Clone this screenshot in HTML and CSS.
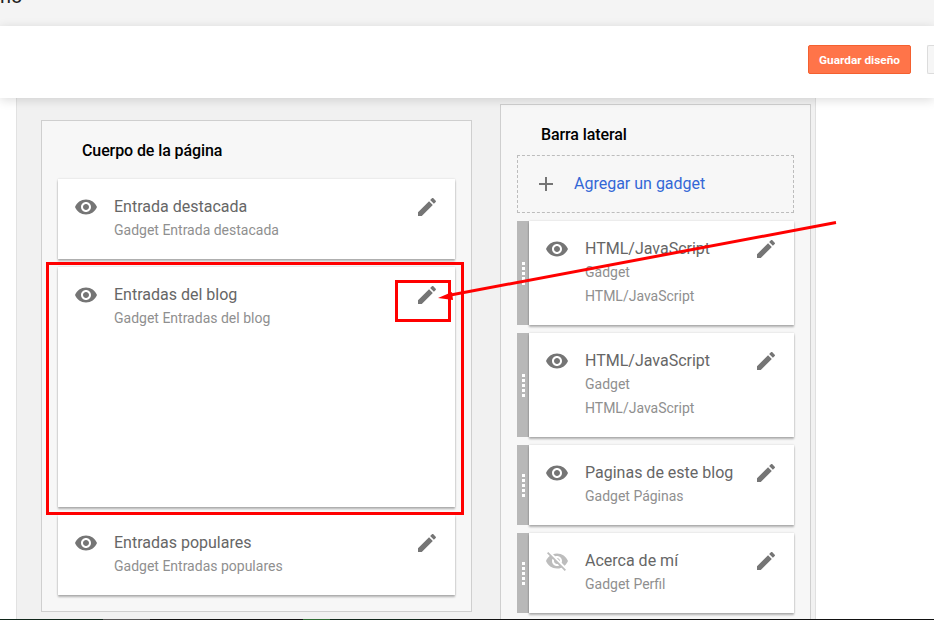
FILE: index.html
```html
<!DOCTYPE html>
<html lang="es">
<head>
  <meta charset="UTF-8" />
  <title>Diseño</title>
  <link rel="stylesheet" href="styles.css">
</head>
<body>
  <svg class="icon-defs" width="0" height="0">
    <symbol id="i-eye" viewBox="0 0 24 24"><path d="M12 4.500C7 4.500 2.730 7.610 1 12c1.730 4.390 6 7.500 11 7.500s9.270-3.110 11-7.500c-1.730-4.390-6-7.500-11-7.500zM12 17c-2.760 0-5-2.240-5-5s2.240-5 5-5 5 2.240 5 5-2.240 5-5 5zm0-8c-1.660 0-3 1.340-3 3s1.340 3 3 3 3-1.340 3-3-1.340-3-3-3z"/></symbol>
    <symbol id="i-eye-off" viewBox="0 0 24 24"><path d="M12 7c2.760 0 5 2.240 5 5 0 .65-.13 1.260-.36 1.830l2.920 2.920c1.510-1.260 2.700-2.890 3.430-4.750-1.730-4.390-6-7.500-11-7.500-1.400 0-2.740.25-3.980.7l2.160 2.160C10.740 7.130 11.350 7 12 7zM2 4.270l2.280 2.280.46.46C3.080 8.300 1.780 10.020 1 12c1.730 4.390 6 7.500 11 7.500 1.550 0 3.030-.3 4.380-.84l.42.42L19.730 22 21 20.730 3.270 3 2 4.270zM7.530 9.800l1.550 1.550c-.05.21-.08.43-.08.65 0 1.660 1.340 3 3 3 .22 0 .44-.03.65-.08l1.550 1.550c-.67.33-1.410.53-2.200.53-2.760 0-5-2.240-5-5 0-.79.2-1.530.53-2.200zm4.310-.78l3.150 3.150.02-.16c0-1.660-1.340-3-3-3l-.17.01z"/></symbol>
    <symbol id="i-edit" viewBox="0 0 24 24"><path d="M3 17.250V21h3.750L17.810 9.940l-3.750-3.750L3 17.250zM20.710 7.040c.39-.39.39-1.020 0-1.410l-2.340-2.340c-.39-.39-1.020-.39-1.410 0l-1.830 1.830 3.750 3.750 1.830-1.830z"/></symbol>
  </svg>

  <div class="topbar"><span class="topbar-title">no</span></div>

  <header class="header">
    <button class="btn btn-save">Guardar diseño</button>
    <button class="btn btn-other"></button>
  </header>

  <main class="canvas">
    <section class="panel panel-body">
      <h2 class="panel-title">Cuerpo de la página</h2>
      <div class="card">
        <svg class="icon eye"><use href="#i-eye"/></svg>
        <div class="card-text">
          <div class="card-name">Entrada destacada</div>
          <div class="card-sub">Gadget Entrada destacada</div>
        </div>
        <svg class="icon edit"><use href="#i-edit"/></svg>
      </div>
      <div class="card card-tall">
        <svg class="icon eye"><use href="#i-eye"/></svg>
        <div class="card-text">
          <div class="card-name">Entradas del blog</div>
          <div class="card-sub">Gadget Entradas del blog</div>
        </div>
        <svg class="icon edit"><use href="#i-edit"/></svg>
      </div>
      <div class="card">
        <svg class="icon eye"><use href="#i-eye"/></svg>
        <div class="card-text">
          <div class="card-name">Entradas populares</div>
          <div class="card-sub">Gadget Entradas populares</div>
        </div>
        <svg class="icon edit"><use href="#i-edit"/></svg>
      </div>
    </section>

    <section class="panel panel-side">
      <h2 class="panel-title">Barra lateral</h2>
      <div class="add-gadget">
        <svg class="plus" width="14" height="14" viewBox="0 0 14 14"><path d="M6 0h2v6h6v2H8v6H6V8H0V6h6z"/></svg>
        <a class="add-link">Agregar un gadget</a>
      </div>
      <div class="row">
        <div class="handle"><span class="dots"></span></div>
        <div class="card">
          <svg class="icon eye"><use href="#i-eye"/></svg>
          <div class="card-text">
            <div class="card-name">HTML/JavaScript</div>
            <div class="card-sub">Gadget<br>HTML/JavaScript</div>
          </div>
          <svg class="icon edit"><use href="#i-edit"/></svg>
        </div>
      </div>
      <div class="row">
        <div class="handle"><span class="dots"></span></div>
        <div class="card">
          <svg class="icon eye"><use href="#i-eye"/></svg>
          <div class="card-text">
            <div class="card-name">HTML/JavaScript</div>
            <div class="card-sub">Gadget<br>HTML/JavaScript</div>
          </div>
          <svg class="icon edit"><use href="#i-edit"/></svg>
        </div>
      </div>
      <div class="row">
        <div class="handle"><span class="dots"></span></div>
        <div class="card">
          <svg class="icon eye"><use href="#i-eye"/></svg>
          <div class="card-text">
            <div class="card-name">Paginas de este blog</div>
            <div class="card-sub">Gadget Páginas</div>
          </div>
          <svg class="icon edit"><use href="#i-edit"/></svg>
        </div>
      </div>
      <div class="row">
        <div class="handle"><span class="dots"></span></div>
        <div class="card">
          <svg class="icon eye eye-hidden"><use href="#i-eye-off"/></svg>
          <div class="card-text">
            <div class="card-name">Acerca de mí</div>
            <div class="card-sub">Gadget Perfil</div>
          </div>
          <svg class="icon edit"><use href="#i-edit"/></svg>
        </div>
      </div>
    </section>
  </main>

  <div class="bottom-line"></div>

  <!-- marcas rojas encima de la captura -->
  <svg class="marks" width="934" height="620" viewBox="0 0 934 620">
    <rect x="47.500" y="263.500" width="415" height="250" fill="none" stroke="#f00" stroke-width="3"/>
    <rect x="396.500" y="281.500" width="53" height="39" fill="none" stroke="#f00" stroke-width="3"/>
    <path d="M836 222.500L448 295.500" fill="none" stroke="#f00" stroke-width="3"/>
    <path d="M438 298L452 292L453 300z" fill="#f00"/>
  </svg>
</body>
</html>
```

FILE: styles.css
```css
html, body {
  margin: 0;
  height: 620px;
  overflow: hidden;
}
body {
  position: relative;
  display: flex;
  flex-direction: column;
  width: 934px;
  background: #fff;
  font-family: Roboto, sans-serif;
}
.icon-defs {
  position: absolute;
}
.topbar {
  flex: none;
  height: 26px;
  background: #f4f4f4;
  overflow: hidden;
  color: #222;
  font-size: 20px;
  line-height: 24px;
}
.topbar-title {
  display: block;
  margin: -16px 0 0 0;
}
.header {
  flex: none;
  position: relative;
  z-index: 2;
  display: flex;
  gap: 16px;
  align-items: center;
  box-sizing: border-box;
  height: 72px;
  padding: 0 0 5px 808px;
  background: #fff;
  box-shadow: 0 2px 10px rgba(0, 0, 0, .14);
}
.btn {
  flex: none;
  height: 29px;
  padding: 0;
  border-radius: 2px;
  font-family: Roboto, sans-serif;
  font-size: 11.800px;
  font-weight: 700;
}
.btn-save {
  width: 103px;
  background: #ff7449;
  border: 1px solid #f4602f;
  color: #fff;
}
.btn-other {
  width: 7px;
  background: #f6f6f6;
  border: 1px solid #dcdcdc;
  border-right: none;
  border-radius: 2px 0 0 2px;
}
.canvas {
  flex: 1;
  min-height: 0;
  display: flex;
  align-items: flex-start;
  width: 800px;
  box-sizing: border-box;
  margin-left: 16px;
  padding: 6px 0 0 24px;
  background: #f1f1f1;
  border-left: 1px solid #e2e2e2;
  border-right: 1px solid #e0e0e0;
}
.panel {
  box-sizing: border-box;
  background: #f7f7f7;
  border: 1px solid #cfcfcf;
}
.panel-body {
  width: 431px;
  height: 492px;
  margin-top: 16px;
  padding: 0 16px;
}
.panel-side {
  width: 311px;
  height: 530px;
  margin-left: 28px;
  padding: 0 16px;
}
.panel-title {
  height: 58px;
  margin: 0;
  padding-left: 24px;
  color: #000;
  font-size: 16px;
  font-weight: 500;
  letter-spacing: -.1px;
  line-height: 60px;
}
.panel-side .panel-title {
  height: 50px;
  line-height: 59px;
}
.card {
  flex: 1;
  display: flex;
  box-sizing: border-box;
  min-width: 0;
  padding: 16px 16px 17px;
  margin-bottom: 8px;
  background: #fff;
  box-shadow: 0 2px 2px rgba(0, 0, 0, .28), 0 0 2px rgba(0, 0, 0, .14);
}
.card-tall {
  height: 240px;
}
.icon {
  flex: none;
  width: 24px;
  height: 24px;
  fill: #757575;
}
.eye-hidden {
  fill: #bdbdbd;
}
.card-text {
  flex: 1;
  min-width: 0;
  padding-left: 16px;
}
.card-name {
  color: #666;
  font-size: 16px;
  line-height: 24px;
}
.card-sub {
  margin-top: -1px;
  color: #8f8f8f;
  font-size: 14px;
  line-height: 24px;
}
.add-gadget {
  display: flex;
  align-items: center;
  gap: 21px;
  box-sizing: border-box;
  height: 58px;
  margin-bottom: 8px;
  padding: 0 0 1px 21px;
  border: 1px dashed #bdbdbd;
}
.plus {
  flex: none;
  fill: #757575;
}
.add-link {
  color: #3367d6;
  font-size: 16px;
}
.row {
  display: flex;
}
.handle {
  flex: none;
  display: flex;
  align-items: center;
  justify-content: center;
  width: 12px;
  margin-bottom: 8px;
  background: #b8b8b8;
}
.dots {
  display: block;
  width: 3px;
  height: 23px;
  background: repeating-linear-gradient(#fff 0 3px, transparent 3px 5px);
}
.bottom-line {
  flex: none;
  height: 1px;
  background: linear-gradient(90deg, #10261a 0 103px, #555 103px 150px, #111 150px 303px, #2f6b33 303px 330px, #10261a 330px 420px, #111 420px);
}
.marks {
  position: absolute;
  left: 0;
  top: 0;
  z-index: 5;
}
```
